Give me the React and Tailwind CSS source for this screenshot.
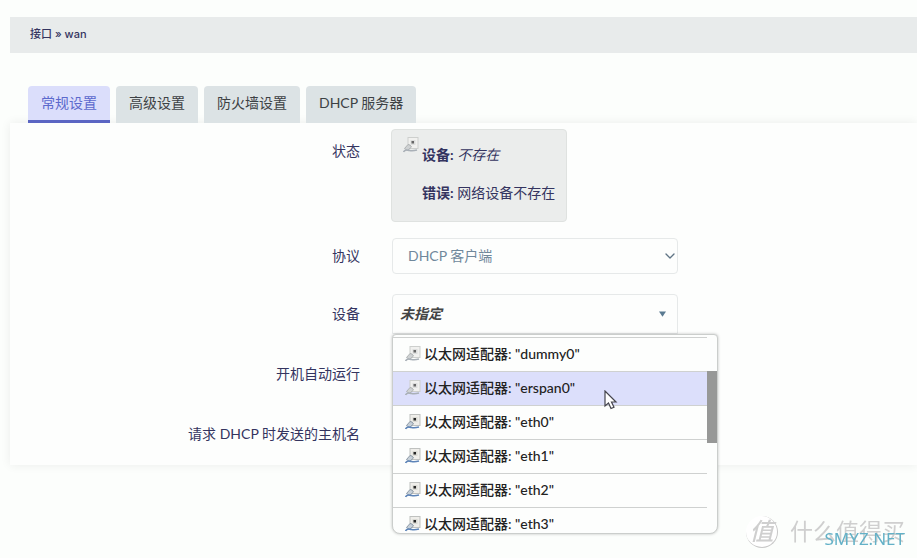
import React, { useState } from 'react'
import { FiChevronDown } from 'react-icons/fi';

const tabs = ['常规设置', '高级设置', '防火墙设置', 'DHCP 服务器'];
const devices = ['dummy0', 'erspan0', 'eth0', 'eth1', 'eth2', 'eth3'];
const missing = ['dummy0', 'erspan0'];

const AdapterIcon = ({ disabled }) => (
  <svg width="16" height="16" viewBox="0 0 16 16" fill="none" className="shrink-0">
    <rect x="5" y="0.5" width="10" height="11" fill={disabled ? '#f1f1ef' : '#efeeea'} stroke={disabled ? '#cdcfcd' : '#bfc1bf'} />
    <path d="M7.500 3h5v5h-5z" fill={disabled ? '#dddedd' : '#dadad4'} />
    <rect x="8.500" y="4" width="2.500" height="2.500" fill={disabled ? '#666' : '#252525'} />
    <path d="M1.500 11.500l3.500-4 2 .5 1.500 2-4 3.500z" fill={disabled ? '#cfd2d3' : '#c7d0d8'} stroke={disabled ? '#a4a8aa' : '#7a8998'} strokeWidth="0.8" />
    <path d="M0.500 15c1.500-3 4-2 6-1.500s4 .5 7.500-.5" stroke={disabled ? '#a9b0b7' : '#5d84b8'} strokeWidth="1.600" />
  </svg>
)

const Row = ({ label, htmlFor, children }) => (
  <div className="flex items-center gap-8">
    <label htmlFor={htmlFor} className="w-[350px] shrink-0 text-right">{label}</label>
    {children}
  </div>
)

const DeviceSelect = () => {
  const [open, setOpen] = useState(true);
  const [device, setDevice] = useState('');

  return (
    <div className="relative w-[286px]">
      <button
        id="device"
        type="button"
        onClick={() => setOpen(!open)}
        className="flex h-10 w-full items-center justify-between rounded-t border border-[#e6e9e9] bg-[#fdfefd] px-[7px] text-[#444]"
      >
        <span className="font-bold italic">{device || '未指定'}</span>
        <svg width="7" height="6" viewBox="0 0 8 6" className="mr-1"><path d="M0 0h8L4 6z" fill="#5b7b92" /></svg>
      </button>

      {open && (
        <div className="absolute left-0 top-full z-10 flex h-[200px] w-[326px] overflow-hidden rounded-b-lg rounded-t border border-[#cbcecc] bg-[#fdfefd] text-[#222] shadow-[0_0_3px_rgba(0,0,0,0.25)]">
          <ul role="listbox" aria-label="设备" className="flex-1 pt-[2px]">
            {devices.map((name) => (
              <li
                key={name}
                role="option"
                aria-selected={name === device}
                onClick={() => { setDevice(name); setOpen(false) }}
                className={`flex h-[34px] items-center gap-[3px] border-t border-[#cfd1d0] pb-[2px] pl-3 font-medium ${name === 'erspan0' ? 'bg-[#dcdffb]' : ''}`}
              >
                <AdapterIcon disabled={missing.includes(name)} />
                <span>以太网适配器: "{name}"</span>
              </li>
            ))}
          </ul>
          <div className="w-[10px] pt-9">
            <div className="h-[72px] bg-[#979897]"></div>
          </div>
          <svg width="14" height="20" viewBox="0 0 14 20" className="absolute left-[211px] top-[55px]">
            <path d="M1 1v15l3.500-3 2.500 5.500 3-1.300-2.500-5.200H12z" fill="#fff" stroke="#44444c" strokeWidth="1.200" />
          </svg>
        </div>
      )}
    </div>
  )
}

const Watermark = () => (
  <div className="fixed bottom-[10px] right-3 flex items-center gap-3 text-[#cfcfcf]">
    <span className="flex h-8 w-8 items-center justify-center rounded-full border-b border-r border-[#c8c8c8] bg-white text-2xl font-medium italic leading-none">值</span>
    <span className="text-[23px] leading-8">什么值得买</span>
    <span className="absolute right-0 top-[11px] font-['Noto_Sans'] text-[17px] leading-6 text-[#63b1c7]">SMYZ.NET</span>
  </div>
)

const App = () => {
  const [active, setActive] = useState(0);

  return (
    <main className="min-h-screen bg-[#fcfefc] pl-[10px] pt-[17px] font-['Inter','Noto_Sans_CJK_SC',sans-serif] text-sm text-[#34345f]">
      <header className="flex h-9 items-center bg-[#e8ebeb] px-5 text-[11px] font-medium">
        接口 » wan
      </header>

      <nav role="tablist" className="mt-[33px] flex gap-[6px] pl-[18px]">
        {tabs.map((tab, i) => (
          <button
            key={tab}
            role="tab"
            aria-selected={i === active}
            onClick={() => setActive(i)}
            className={`h-[37px] rounded-t border-b-3 px-[13px] font-['Lato','Noto_Sans_CJK_SC',sans-serif] ${i === active ? 'border-[#5b65c3] bg-[#dbdefb] text-[#5b69cd]' : 'border-[#dce3e5] bg-[#dce3e5] text-[#3c4144]'}`}
          >
            {tab}
          </button>
        ))}
      </nav>

      <section className="flex flex-col bg-[#fdfefd] pb-[11px] pt-[6px] font-['Lato','Noto_Sans_CJK_SC',sans-serif] shadow-[0_0_10px_rgba(0,0,0,0.07)]">
        <div className="flex gap-8">
          <span className="w-[350px] shrink-0 pt-1 text-right leading-9">状态</span>
          <div className="-ml-px flex h-[93px] gap-[3px] rounded border border-[#dfe2e0] bg-[#ebedec] px-[11px] pt-[7px]">
            <AdapterIcon disabled />
            <div className="flex flex-col gap-[14px] leading-6">
              <p className="pt-[6px]"><b>设备:</b> <i>不存在</i></p>
              <p><b>错误:</b> 网络设备不存在</p>
            </div>
          </div>
        </div>

        <div className="mt-4 flex flex-col gap-5">
          <Row label="协议" htmlFor="proto">
            <div className="relative w-[286px]">
              <select id="proto" className="h-9 w-full appearance-none rounded border border-[#e6e9e9] bg-transparent px-[15px] text-[#70889b]">
                <option>DHCP 客户端</option>
              </select>
              <FiChevronDown size={16} className="pointer-events-none absolute right-0 top-[10px] text-[#5f7484]" />
            </div>
          </Row>
          <Row label="设备" htmlFor="device">
            <DeviceSelect />
          </Row>
          <Row label="开机自动运行" htmlFor="auto">
            <div className="flex h-10 items-center">
              <input id="auto" type="checkbox" defaultChecked />
            </div>
          </Row>
          <Row label="请求 DHCP 时发送的主机名" htmlFor="hostname">
            <input id="hostname" type="text" className="h-10 w-[286px] rounded border border-[#e6e9e9] px-2" />
          </Row>
        </div>
      </section>

      <Watermark />
    </main>
  )
}

export default App
